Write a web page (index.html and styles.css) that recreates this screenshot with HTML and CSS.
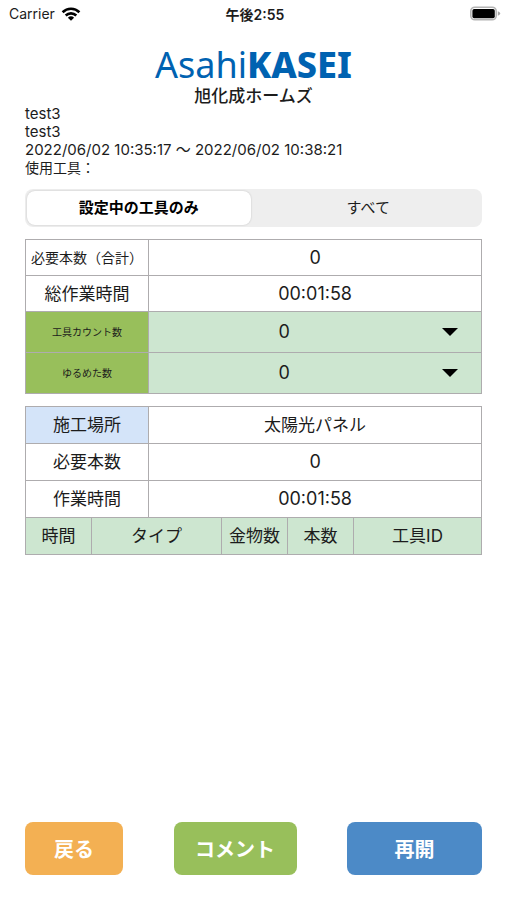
FILE: index.html
```html
<!DOCTYPE html>
<html lang="ja">
<head>
<meta charset="utf-8">
<meta name="viewport" content="width=device-width, initial-scale=1">
<title>作業実績</title>
<link rel="stylesheet" href="styles.css">
</head>
<body>
<div class="screen">
  <header class="status">
    <div class="carrier">
      <span>Carrier</span>
      <svg width="20" height="14" viewBox="0 0 20 14" aria-hidden="true">
        <g fill="none" stroke="#000" stroke-width="2.6">
          <path d="M1.6 5.2a12 12 0 0 1 16.8 0"/>
          <path d="M4.7 8.5a7.6 7.6 0 0 1 10.6 0"/>
        </g>
        <path d="M6.9 10.7a4.5 4.5 0 0 1 6.2 0L10 13.8z"/>
      </svg>
    </div>
    <div class="clock">午後2:55</div>
    <svg class="battery" width="32" height="16" viewBox="0 0 32 16" aria-hidden="true">
      <rect x="1.8" y="1.2" width="25.4" height="12.6" rx="4" fill="#fff" stroke="#b4b4b4" stroke-width="1.6"/>
      <rect x="3.4" y="2.9" width="22.4" height="9.4" rx="1.8"/>
      <path d="M28.8 5.2q2.4 1 2.4 2.3t-2.4 2.3z" fill="#a6a6a6"/>
    </svg>
  </header>

  <main class="content">
    <div class="logo">
      <div class="brand">Asahi<b>KASEI</b></div>
      <div class="company">旭化成ホームズ</div>
    </div>

    <div class="info">
      <div>test3</div>
      <div>test3</div>
      <div>2022/06/02 10:35:17 〜 2022/06/02 10:38:21</div>
      <div class="tools">使用工具：</div>
    </div>

    <div class="segments" role="radiogroup">
      <label class="segment"><input type="radio" name="scope" checked><span>設定中の工具のみ</span></label>
      <label class="segment"><input type="radio" name="scope"><span>すべて</span></label>
    </div>

    <table class="grid totals">
      <tr><th scope="row" class="medium">必要本数（合計）</th><td class="figure">0</td></tr>
      <tr><th scope="row">総作業時間</th><td class="figure">00:01:58</td></tr>
      <tr class="picker">
        <th scope="row"><label for="count">工具カウント数</label></th>
        <td class="figure">
          <div class="dropdown">
            <select id="count"><option>0</option></select>
            <svg width="16" height="8" viewBox="0 0 16 8" aria-hidden="true"><path d="M0 0h16L8 8z"/></svg>
          </div>
        </td>
      </tr>
      <tr class="picker">
        <th scope="row"><label for="loosened">ゆるめた数</label></th>
        <td class="figure">
          <div class="dropdown">
            <select id="loosened"><option>0</option></select>
            <svg width="16" height="8" viewBox="0 0 16 8" aria-hidden="true"><path d="M0 0h16L8 8z"/></svg>
          </div>
        </td>
      </tr>
    </table>

    <table class="grid">
      <tr><th scope="row" class="place">施工場所</th><td>太陽光パネル</td></tr>
      <tr><th scope="row">必要本数</th><td class="figure">0</td></tr>
      <tr><th scope="row">作業時間</th><td class="figure">00:01:58</td></tr>
    </table>
    <table class="grid records">
      <colgroup><col class="time"><col class="type"><col class="metal"><col class="number"><col></colgroup>
      <tr><th scope="col">時間</th><th scope="col">タイプ</th><th scope="col">金物数</th><th scope="col">本数</th><th scope="col">工具ID</th></tr>
    </table>

    <div class="actions">
      <button type="button" class="back">戻る</button>
      <button type="button" class="comment">コメント</button>
      <button type="button" class="resume">再開</button>
    </div>
  </main>
</div>
</body>
</html>
```
FILE: styles.css
```css
* {
  box-sizing: border-box;
}

body {
  margin: 0;
  background: #fff;
  color: #1c1c1c;
  font-family: Inter, "Noto Sans CJK JP", sans-serif;
  font-size: 17px;
}

.screen {
  display: flex;
  flex-direction: column;
  min-height: 100vh;
}

.status {
  display: grid;
  grid-template-columns: 1fr auto 1fr;
  align-items: center;
  height: 27px;
  padding: 0 6px 0 9px;
  font-size: 14px;
}

.carrier {
  display: flex;
  align-items: center;
  gap: 6px;
}

.clock {
  font-size: 14px;
  font-weight: 600;
}

.battery {
  justify-self: end;
}

.content {
  display: flex;
  flex: 1;
  flex-direction: column;
  padding: 17px 25px 25px;
}

.logo {
  text-align: center;
}

.brand {
  color: #0062b1;
  font-family: "Noto Sans", "Open Sans", sans-serif;
  font-size: 36px;
  line-height: 42px;
}

.brand b {
  font-weight: 800;
}

.company {
  font-size: 17px;
  font-weight: 500;
  line-height: 20px;
}

.info {
  margin-top: -1px;
  font-size: 15px;
  line-height: 18px;
}

.tools {
  font-size: 14px;
}

.segments {
  display: flex;
  gap: 6px;
  height: 38px;
  margin-top: 12px;
  padding: 2px;
  border-radius: 8px;
  background: #eee;
}

.segment {
  position: relative;
  display: flex;
  flex: 1;
}

.segment input {
  position: absolute;
  inset: 0;
  margin: 0;
  opacity: 0;
}

.segment span {
  display: flex;
  flex: 1;
  align-items: center;
  justify-content: center;
  border-radius: 8px;
  font-size: 15px;
  line-height: 20px;
}

.segment input:checked + span {
  background: #fff;
  box-shadow: 0 0 2px rgba(0, 0, 0, 0.2);
  color: #000;
  font-weight: 700;
}

.grid {
  width: 100%;
  margin-top: 12px;
  border-collapse: collapse;
  table-layout: fixed;
}

.grid th,
.grid td {
  height: 37px;
  padding: 0;
  border: 1px solid #aeacae;
  font-weight: 400;
  line-height: 20px;
  text-align: center;
  white-space: nowrap;
}

.totals th,
.totals td {
  height: 36px;
}

.grid td {
  font-size: 17px;
}

.grid .figure {
  font-size: 18px;
}

.grid th:first-child {
  width: 27%;
}

.grid .medium {
  font-size: 14px;
}

.grid .picker th {
  background: #98bf5b;
  font-size: 10px;
}

.grid .picker td {
  height: 41px;
  background: #cde6d0;
}

.dropdown {
  position: relative;
}

.dropdown select {
  display: block;
  width: 100%;
  height: 40px;
  padding: 0 62px 0 0;
  border: 0;
  background: transparent;
  color: inherit;
  font: inherit;
  appearance: none;
  text-align: center;
  text-align-last: center;
}

.dropdown svg {
  position: absolute;
  top: 16px;
  right: 23px;
  pointer-events: none;
}

.grid .place {
  background: #d4e4f9;
}

.records {
  margin-top: -1px;
}

.grid.records th {
  width: auto;
  background: #cde6d0;
}

.records .time,
.records .metal,
.records .number {
  width: 66px;
}

.records .type {
  width: 130px;
}

.actions {
  display: flex;
  justify-content: space-between;
  margin-top: auto;
}

.actions button {
  height: 53px;
  padding: 0;
  border: 0;
  border-radius: 8px;
  color: #fff;
  font-family: inherit;
  font-size: 20px;
  font-weight: 700;
}

.actions .back {
  width: 98px;
  background: #f3b053;
}

.actions .comment {
  width: 123px;
  background: #98bf5b;
}

.actions .resume {
  width: 135px;
  background: #4c8ac7;
}
```
